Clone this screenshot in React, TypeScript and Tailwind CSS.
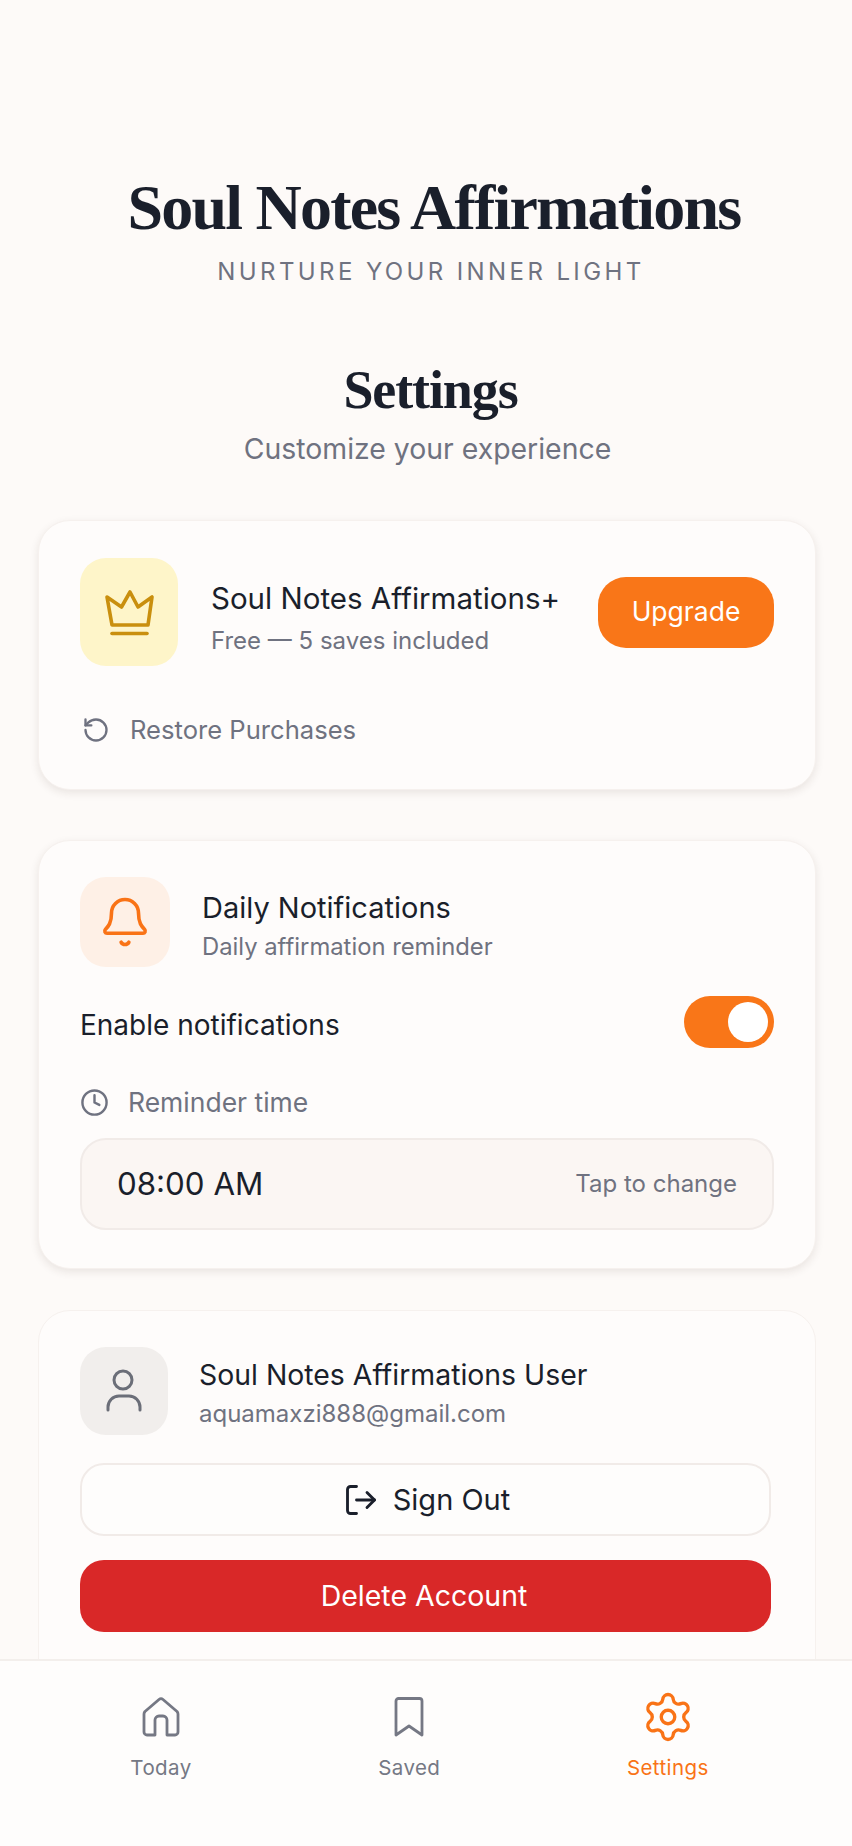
import { Bell, Clock, LogOut, RotateCcw, Settings } from 'lucide-react';

const sans = "font-['Inter','Noto_Sans',sans-serif]";

function CrownIcon() {
  return (
    <svg width="51" height="47" viewBox="0 0 51 47" fill="none" stroke="#c98f0e" strokeWidth="3.6" strokeLinecap="round" strokeLinejoin="round">
      <path d="M3 8 L17.5 18 L26 3 L34 18 L48 8 L44 36 H8 Z" />
      <path d="M8 44.5 H43" />
    </svg>
  );
}

function UserIcon() {
  return (
    <svg width="40" height="46" viewBox="0 0 40 46" fill="none" stroke="#6b6e78" strokeWidth="3" strokeLinecap="round" strokeLinejoin="round">
      <circle cx="19" cy="12" r="9" />
      <path d="M4 42 V39 a11 11 0 0 1 11-11 h10 a11 11 0 0 1 11 11 V42" />
    </svg>
  );
}

function HomeIcon() {
  return (
    <svg width="42" height="42" viewBox="0 0 42 42" fill="none" stroke="currentColor" strokeWidth="2.8" strokeLinecap="round" strokeLinejoin="round">
      <path d="M15 39 V24 a4 4 0 0 1 4-4 h4 a4 4 0 0 1 4 4 V39 h8 a3 3 0 0 0 3-3 V18 a4 4 0 0 0-1-2.500 L23 3.500 a3 3 0 0 0-4 0 L5 15.500 a4 4 0 0 0-1 2.500 V36 a3 3 0 0 0 3 3 Z" />
    </svg>
  );
}

function SavedIcon() {
  return (
    <svg width="32" height="42" viewBox="0 0 32 42" fill="none" stroke="currentColor" strokeWidth="2.8" strokeLinecap="round" strokeLinejoin="round">
      <path d="M3 5 a2.500 2.500 0 0 1 2.500-2.500 h21 a2.500 2.500 0 0 1 2.500 2.500 V39 L16 30 L3 39 Z" />
    </svg>
  );
}

export default function App() {
  return (
    <div className={`flex flex-col h-screen overflow-hidden bg-[#fdfaf8] ${sans}`}>
      <main className="flex-1 overflow-hidden pr-[36px] pl-[38px] pt-[171px]">
        {/* 헤더 */}
        <div className="flex flex-col items-center">
          <h1 className="ml-[14px] whitespace-nowrap font-['Liberation_Serif',serif] text-[64px] leading-[74px] font-bold tracking-[-1.8px] text-[#1a1f2b]">
            Soul Notes Affirmations
          </h1>
          <p className="ml-[8px] mt-[12px] text-[24px] leading-[30px] tracking-[3.4px] text-[#6f7280]">
            NURTURE YOUR INNER LIGHT
          </p>
          <h2 className="ml-[7px] mt-[73px] font-['Liberation_Serif',serif] text-[54px] leading-[60px] font-bold tracking-[-1.1px] text-[#1a1f2b]">
            Settings
          </h2>
          <p className="ml-[1px] mt-[11px] text-[28.4px] leading-[36px] text-[#6f7280]">Customize your experience</p>
        </div>

        {/* 구독 카드 */}
        <section className="mt-[53px] h-[270px] rounded-[32px] border border-[#f6f1ee] bg-[#fefcfb] pr-[41px] pl-[41px] pt-[37px] shadow-[0_3px_8px_rgba(60,40,30,0.1)]">
          <div className="flex items-center">
            <div className="flex h-[108px] w-[98px] shrink-0 items-center justify-center rounded-[26px] bg-[#fef5c9]">
              <CrownIcon />
            </div>
            <div className="ml-[33px] flex-1 pt-[12px]">
              <p className="text-[29.5px] leading-[36px] text-[#1a1f2b]">Soul Notes Affirmations+</p>
              <p className="mt-[10px] text-[24px] leading-[30px] text-[#6f7280]">Free — 5 saves included</p>
            </div>
            <button className="h-[71px] w-[176px] rounded-[28px] bg-[#f97618] text-[26.5px] text-white">Upgrade</button>
          </div>
          <div className="mt-[47px] flex items-center gap-[20px] pl-[2px] text-[#6f7280]">
            <RotateCcw size={28} strokeWidth={2} />
            <span className="text-[25.6px] leading-[34px]">Restore Purchases</span>
          </div>
        </section>

        {/* 알림 카드 */}
        <section className="mt-[50px] h-[429px] rounded-[32px] border border-[#f6f1ee] bg-[#fefcfb] pr-[41px] pl-[41px] pt-[36px] shadow-[0_3px_8px_rgba(60,40,30,0.1)]">
          <div className="flex items-center">
            <div className="flex h-[90px] w-[90px] shrink-0 items-center justify-center rounded-[26px] bg-[#fef0e6]">
              <Bell size={54} strokeWidth={1.6} className="text-[#f97316]" />
            </div>
            <div className="ml-[32px] pt-[7px]">
              <p className="text-[29px] leading-[36px] text-[#1a1f2b]">Daily Notifications</p>
              <p className="mt-[6px] text-[23.8px] leading-[30px] text-[#6f7280]">Daily affirmation reminder</p>
            </div>
          </div>
          <div className="mt-[29px] flex items-center justify-between">
            <span className="pt-[6px] text-[28px] leading-[36px] text-[#1a1f2b]">Enable notifications</span>
            <div className="flex h-[52px] w-[90px] items-center justify-end rounded-full bg-[#f97618] pr-[6px]">
              <div className="h-[40px] w-[40px] rounded-full bg-white" />
            </div>
          </div>
          <div className="mt-[37px] flex items-center gap-[19px] text-[#6f7280]">
            <Clock size={29} strokeWidth={2} />
            <span className="text-[26.5px] leading-[34px]">Reminder time</span>
          </div>
          <div className="mt-[19px] flex h-[92px] items-center justify-between rounded-[26px] border-2 border-[#f1ebe8] bg-[#fbf6f3] px-[35px]">
            <span className="text-[31.3px] text-[#1a1f2b]">08:00 AM</span>
            <span className="text-[24px] text-[#6f7280]">Tap to change</span>
          </div>
        </section>

        {/* 계정 카드 */}
        <section className="mt-[41px] h-[400px] rounded-[32px] border border-[#f6f1ee] bg-[#fefcfb] pr-[41px] pl-[41px] pt-[36px]">
          <div className="flex items-center">
            <div className="flex h-[88px] w-[88px] shrink-0 items-center justify-center rounded-[26px] bg-[#f1eeec]">
              <UserIcon />
            </div>
            <div className="ml-[31px] pt-[4px]">
              <p className="text-[28.4px] leading-[36px] text-[#1a1f2b]">Soul Notes Affirmations User</p>
              <p className="mt-[6px] text-[24px] leading-[30px] text-[#6f7280]">aquamaxzi888@gmail.com</p>
            </div>
          </div>
          <button className="mt-[28px] flex h-[73px] w-[691px] items-center justify-center gap-[14px] rounded-[24px] border-2 border-[#f1ebe8] bg-[#fefdfc] pl-[2px] text-[29px] text-[#1a1f2b]">
            <LogOut size={36} strokeWidth={1.9} />
            Sign Out
          </button>
          <button className="mt-[24px] h-[72px] w-[691px] rounded-[24px] bg-[#d92828] pr-[3px] text-[28.5px] text-white">
            Delete Account
          </button>
        </section>
      </main>

      {/* 하단 탭 */}
      <nav className="flex h-[187px] shrink-0 items-start justify-around border-t-2 border-[#f3efec] bg-[#fefdfc] pr-[50px] pl-[37px] pt-[30px]">
        <div className="flex flex-col items-center gap-[11px] text-[#757884]">
          <div className="flex h-[52px] items-center justify-center"><HomeIcon /></div>
          <span className="text-[20.5px] leading-[28px] tracking-[0.4px]">Today</span>
        </div>
        <div className="flex flex-col items-center gap-[11px] text-[#757884]">
          <div className="flex h-[52px] items-center justify-center"><SavedIcon /></div>
          <span className="text-[20.5px] leading-[28px] tracking-[0.4px]">Saved</span>
        </div>
        <div className="flex flex-col items-center gap-[11px] text-[#f97316]">
          <div className="flex h-[52px] items-center justify-center"><Settings size={54} strokeWidth={1.5} /></div>
          <span className="text-[20.5px] leading-[28px] tracking-[0.4px]">Settings</span>
        </div>
      </nav>
    </div>
  );
}
